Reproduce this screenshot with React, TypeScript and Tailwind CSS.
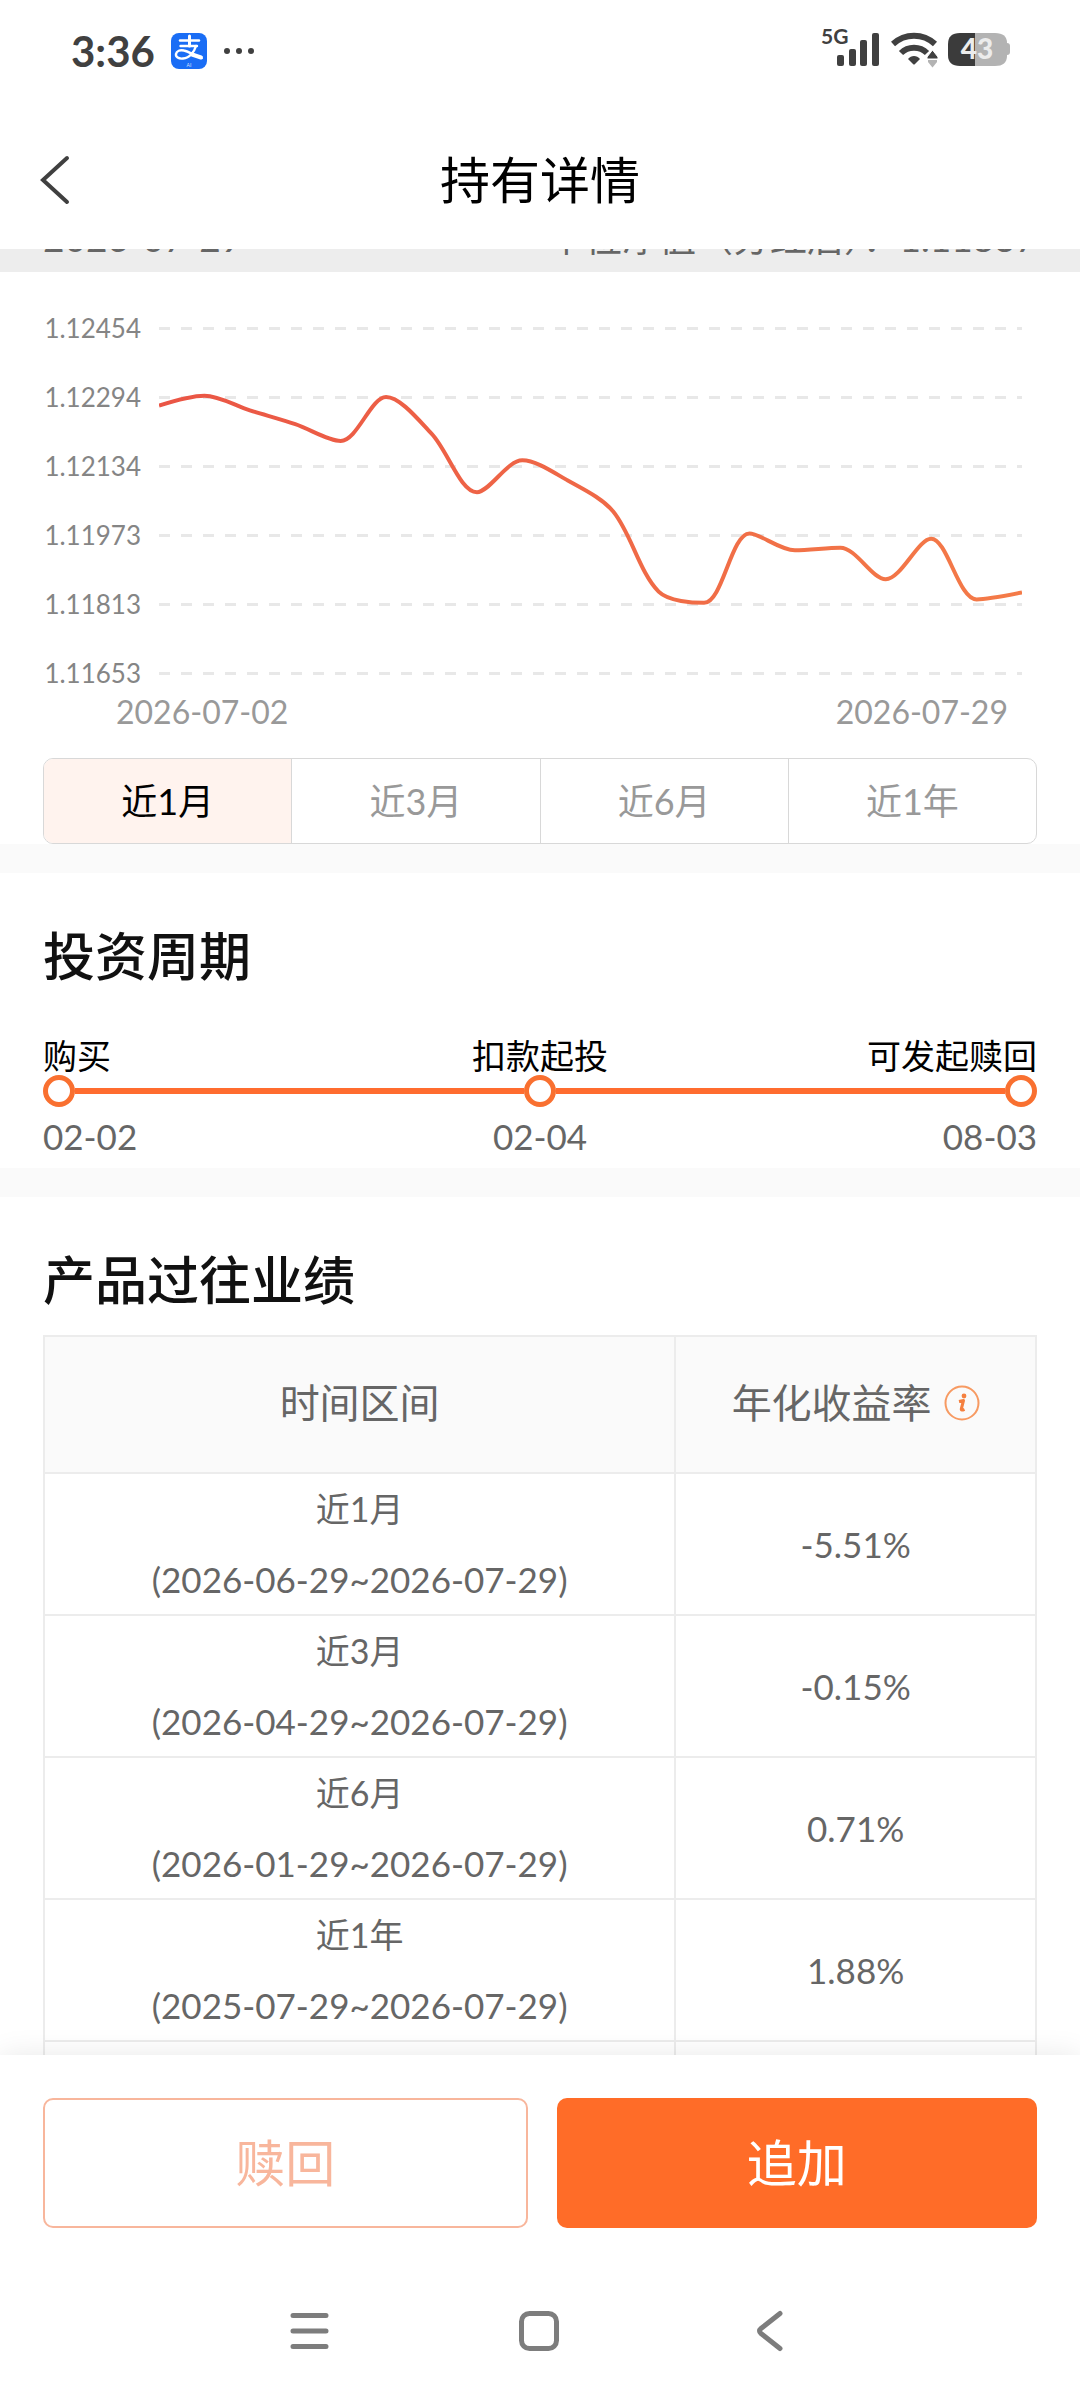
import {
  useState,
} from "react";

const ranges = ["近1月", "近3月", "近6月", "近1年"];

const axisLabels = [
  "1.12454",
  "1.12294",
  "1.12134",
  "1.11973",
  "1.11813",
  "1.11653",
];

const navValues = [
  1.12275, 1.12298, 1.12264, 1.12232, 1.12193,
  1.12295, 1.1221, 1.12074, 1.12148, 1.12101,
  1.12029, 1.11843, 1.11817, 1.11978, 1.11939,
  1.11945, 1.11872, 1.11966, 1.11825, 1.11841,
];

const steps = [
  { label: "购买", date: "02-02", align: "text-left" },
  { label: "扣款起投", date: "02-04", align: "text-center" },
  { label: "可发起赎回", date: "08-03", align: "text-right" },
];

const performance = [
  { name: "近1月", period: "(2026-06-29~2026-07-29)", rate: "-5.51%" },
  { name: "近3月", period: "(2026-04-29~2026-07-29)", rate: "-0.15%" },
  { name: "近6月", period: "(2026-01-29~2026-07-29)", rate: "0.71%" },
  { name: "近1年", period: "(2025-07-29~2026-07-29)", rate: "1.88%" },
];

const CHART_WIDTH = 863;
const ROW_GAP = 69;
const TOP = 16.5;
const SMOOTH = 0.32;

type Point = [number, number];

function clamp(p: Point, a: Point, b: Point): Point {
  return [
    Math.max(Math.min(p[0], Math.max(a[0], b[0])), Math.min(a[0], b[0])),
    Math.max(Math.min(p[1], Math.max(a[1], b[1])), Math.min(a[1], b[1])),
  ];
}

// bezier curve through every point, control points never overshoot the neighbours
function smoothPath(points: Point[]) {
  let d = `M${points[0][0]} ${points[0][1]}`;
  let out: Point = points[0];

  for (let i = 1; i < points.length; i++) {
    const prev = points[i - 1];
    const cur = points[i];
    const next = points[i + 1];
    let cpIn: Point = cur;
    let cpOut: Point = cur;

    if (next) {
      const lenPrev = Math.hypot(cur[0] - prev[0], cur[1] - prev[1]);
      const lenNext = Math.hypot(next[0] - cur[0], next[1] - cur[1]);
      const k = (SMOOTH * lenNext) / (lenNext + lenPrev);

      cpOut = clamp(
        [cur[0] + (next[0] - prev[0]) * k, cur[1] + (next[1] - prev[1]) * k],
        cur,
        next
      );
      const back = lenPrev / lenNext;
      cpIn = clamp(
        [
          cur[0] - (cpOut[0] - cur[0]) * back,
          cur[1] - (cpOut[1] - cur[1]) * back,
        ],
        prev,
        cur
      );
      cpOut = [
        cur[0] + (cur[0] - cpIn[0]) / back,
        cur[1] + (cur[1] - cpIn[1]) / back,
      ];
    }

    d += ` C${out[0]} ${out[1]} ${cpIn[0]} ${cpIn[1]} ${cur[0]} ${cur[1]}`;
    out = cpOut;
  }

  return d;
}

function StatusBar() {
  return (
    <div className="flex h-28 shrink-0 items-center justify-between pr-[69px] pb-[10px] pl-[71px] text-[#404040]">

      <div className="flex items-center">
        <span className="text-[42px] leading-[48px] font-bold">3:36</span>

        <svg className="ml-4 size-9" viewBox="0 0 36 36" fill="none">
          <rect width="36" height="36" rx="8" fill="#1a6df5" />
          <g stroke="#fff" strokeLinecap="round" strokeLinejoin="round">
            <path d="M9 7.500h19" strokeWidth="2.4" />
            <path d="M18.500 3v10" strokeWidth="3" />
            <path d="M9.500 13h16.500" strokeWidth="2.4" />
            <path
              d="M25 13C23.500 18 19 25 12 25.500C7.500 26 4.500 24 5 21C5.500 18 9 16.500 13 17.500C18 18.600 23 22.500 30 24.500"
              strokeWidth="2.4"
            />
            <path d="M21 21.500L30 24.500" strokeWidth="4" />
          </g>
          <text
            x="18"
            y="34"
            fontSize="5"
            textAnchor="middle"
            fill="#fff"
            opacity="0.8"
          >
            AI
          </text>
        </svg>

        <svg className="ml-4 h-2 w-8" viewBox="0 0 32 8" fill="currentColor">
          <circle cx="4" cy="4" r="3" />
          <circle cx="16" cy="4" r="3" />
          <circle cx="28" cy="4" r="3" />
        </svg>
      </div>

      <div className="flex items-center">
        <svg className="h-12 w-[60px]" viewBox="0 -1 60 48" fill="currentColor">
          <text x="0" y="16" fontSize="21" fontWeight="700">5G</text>
          <rect x="16" y="27" width="7" height="11" rx="2" />
          <rect x="28" y="21" width="7" height="17" rx="2" />
          <rect x="39" y="12" width="7" height="26" rx="2" />
          <rect x="51" y="5" width="7" height="33" rx="2" />
        </svg>

        <svg className="ml-[10px] h-12 w-12" viewBox="0 -1 48 48">
          <g fill="none" stroke="currentColor" strokeWidth="6">
            <path d="M2 16C14 5 32 5 44 16" />
            <path d="M10 25C17 18 29 18 36 25" />
          </g>
          <path
            d="M17 31C20 27 26 27 29 31L24 36Q23 37 22 36Z"
            fill="currentColor"
          />
          <path
            d="M41.500 22L47 29V31H36V29Z"
            fill="currentColor"
            stroke="#fff"
            strokeWidth="1"
          />
          <path d="M37 32H46V34L41.500 39.500L37 34Z" fill="#b3b3b3" />
        </svg>

        <svg className="ml-2 h-12 w-16" viewBox="0 -1 64 48">
          <path d="M28 5H48Q60 5 60 15V28Q60 38 48 38H28Z" fill="#b3b3b3" />
          <path d="M60 15Q63 15 63 18V24Q63 27 60 27Z" fill="#b3b3b3" />
          <path d="M28 5H13Q1 5 1 16V27Q1 38 13 38H28Z" fill="#3b3b3b" />
          <text
            x="30"
            y="31"
            fontSize="28"
            fontWeight="900"
            textAnchor="middle"
            fill="#ececec"
          >
            43
          </text>
        </svg>
      </div>

    </div>
  );
}

function Header() {
  return (
    <header className="grid h-[137px] shrink-0 grid-cols-[1fr_auto_1fr] items-center px-10 pb-[2px]">
      <button type="button" aria-label="返回" className="w-8 text-[#404040]">
        <svg
          className="h-[50px] w-8"
          viewBox="0 0 32 50"
          fill="none"
          stroke="currentColor"
          strokeWidth="4"
          strokeLinecap="round"
        >
          <path d="M27 3L3 25L27 47" />
        </svg>
      </button>

      <h1 className="text-[50px] leading-[60px] text-black">
        持有详情
      </h1>
    </header>
  );
}

function NavChart() {
  const [active, setActive] = useState(0);

  const points = navValues.map((value, i): Point => [
    (i * CHART_WIDTH) / (navValues.length - 1),
    TOP + ((1.12454 - value) / 0.00801) * ROW_GAP * 5,
  ]);

  return (
    <section className="pt-10">

      <div className="flex gap-[18px] pr-[58px] pl-[43px]">
        <div className="flex w-[98px] flex-col gap-9 text-right text-[26px] leading-[33px] text-[#858585]">
          {axisLabels.map((label) => (
            <span key={label}>{label}</span>
          ))}
        </div>

        <svg
          className="min-w-0 flex-1"
          viewBox="0 0 863 378"
          fill="none"
          role="img"
          aria-label="单位净值"
        >
          <defs>
            <linearGradient id="line" x1="0" x2="863" y1="0" y2="0" gradientUnits="userSpaceOnUse">
              <stop offset="0" stopColor="#ea5545" />
              <stop offset="1" stopColor="#f47b48" />
            </linearGradient>
          </defs>
          {axisLabels.map((label, i) => (
            <path
              key={label}
              d={`M0 ${TOP + i * ROW_GAP}H${CHART_WIDTH}`}
              stroke="#e8e8e8"
              strokeWidth="3"
              strokeDasharray="11 11"
            />
          ))}
          <path d={smoothPath(points)} stroke="url(#line)" strokeWidth="4" />
        </svg>
      </div>

      <div className="flex justify-between pr-[72px] pl-[116px] text-[32px] leading-[44px] text-[#999999]">
        <span>2026-07-02</span>
        <span>2026-07-29</span>
      </div>

      <div className="mx-[43px] mt-6 flex overflow-hidden rounded-[10px] border border-[#d8d8d8]">
        {ranges.map((range, i) => (
          <button
            key={range}
            type="button"
            aria-pressed={active === i}
            onClick={() => setActive(i)}
            className={`h-[84px] flex-1 text-[36px] ${
              i > 0 ? "border-l border-[#d8d8d8]" : ""
            } ${
              active === i ? "bg-[#fff3ee] text-black" : "text-[#999999]"
            }`}
          >
            {range}
          </button>
        ))}
      </div>

    </section>
  );
}

function InvestCycle() {
  return (
    <section className="px-[43px] pt-[53px] pb-[10px]">
      <h2 className="text-[52px] leading-[60px] font-medium text-[#111111]">
        投资周期
      </h2>

      <div className="mt-[51px] grid grid-cols-3 text-[34px] leading-[38px] text-black">
        {steps.map((step) => (
          <span key={step.label} className={step.align}>{step.label}</span>
        ))}
      </div>

      <div className="flex items-center">
        <span className="size-8 rounded-full border-[5px] border-[#f97030]" />
        <span className="h-[6px] flex-1 bg-[#ff6c2f]" />
        <span className="size-8 rounded-full border-[5px] border-[#f97030]" />
        <span className="h-[6px] flex-1 bg-[#ff6c2f]" />
        <span className="size-8 rounded-full border-[5px] border-[#f97030]" />
      </div>

      <div className="mt-[7px] grid grid-cols-3 text-[35px] leading-[44px] text-[#666666]">
        {steps.map((step) => (
          <span key={step.date} className={step.align}>{step.date}</span>
        ))}
      </div>
    </section>
  );
}

function InfoIcon() {
  return (
    <svg className="size-9" viewBox="0 0 36 36" fill="none">
      <circle cx="18" cy="18" r="16.500" stroke="#f79a62" strokeWidth="2" />
      <circle cx="20" cy="11" r="2.400" fill="#f5803f" />
      <path
        d="M15 16.500L19.500 15.500L17.300 24Q17 26 20.500 24.300"
        stroke="#f5803f"
        strokeWidth="3"
        strokeLinejoin="round"
      />
    </svg>
  );
}

function PastPerformance() {
  return (
    <section className="px-[43px] pt-[53px]">
      <h2 className="text-[52px] leading-[60px] font-medium text-[#111111]">
        产品过往业绩
      </h2>

      <table className="mt-[25px] w-full table-fixed border-collapse text-center text-[35px] leading-[70px] text-[#666666] [&_td]:border-2 [&_td]:border-[#ececec] [&_td]:p-0 [&_th]:border-2 [&_th]:border-[#ececec]">
        <colgroup>
          <col className="w-7/11" />
          <col />
        </colgroup>
        <thead>
          <tr className="h-[137px] bg-[#fafafa] text-[40px]">
            <th className="pb-1 font-normal">时间区间</th>
            <th className="pb-1 font-normal">
              <span className="flex items-center justify-center gap-3">
                年化收益率
                <button type="button" aria-label="说明">
                  <InfoIcon />
                </button>
              </span>
            </th>
          </tr>
        </thead>
        <tbody>
          {performance.map((row) => (
            <tr key={row.name}>
              <td>
                <p className="text-[34px]">{row.name}</p>
                <p>{row.period}</p>
              </td>
              <td>{row.rate}</td>
            </tr>
          ))}
          <tr className="h-[142px]">
            <td />
            <td />
          </tr>
        </tbody>
      </table>
    </section>
  );
}

function BottomBar() {
  return (
    <footer className="relative shrink-0 bg-white shadow-[0_0_28px_rgba(0,0,0,0.09)]">

      <div className="flex gap-[29px] px-[43px] pt-[43px]">
        <button
          type="button"
          className="h-[130px] flex-1 rounded-[10px] border-2 border-[#f8b69c] text-[50px] text-[#f8b69c]"
        >
          赎回
        </button>
        <button
          type="button"
          className="h-[130px] flex-1 rounded-[10px] bg-[#ff6c28] text-[50px] text-white"
        >
          追加
        </button>
      </div>

      <nav className="mt-[34px] flex h-[138px] items-center justify-center gap-[186px] text-[#7d7d7d]">
        <button type="button" aria-label="最近任务">
          <svg className="size-11" viewBox="0 0 44 44" fill="none" stroke="currentColor" strokeWidth="5" strokeLinecap="round">
            <path d="M5 6.500H38M5 22H38M5 37.500H38" />
          </svg>
        </button>
        <button type="button" aria-label="主屏幕">
          <svg className="size-11" viewBox="0 0 44 44" fill="none" stroke="currentColor" strokeWidth="5">
            <rect x="3.500" y="4.500" width="35" height="35" rx="8" />
          </svg>
        </button>
        <button type="button" aria-label="返回">
          <svg className="size-11" viewBox="0 0 44 44" fill="none" stroke="currentColor" strokeWidth="5" strokeLinecap="round" strokeLinejoin="round">
            <path d="M32 4.500L13 19.500Q10 22 13 24.500L32 39.500" />
          </svg>
        </button>
      </nav>

    </footer>
  );
}

function App() {
  return (
    <div className="flex h-screen flex-col overflow-hidden bg-white font-[Lato,'Noto_Sans_CJK_SC',sans-serif]">
      <StatusBar />
      <Header />

      <main className="min-h-0 flex-1 overflow-hidden">
        {/* net value row, scrolled up under the header */}
        <div className="h-[23px] overflow-hidden bg-[#ededed] px-[43px]">
          <div className="-mt-[34px] flex justify-between text-[37px] leading-[46px] text-[#666666]">
            <span>2026-07-29</span>
            <span>单位净值（分红后）：1.11837</span>
          </div>
        </div>

        <NavChart />
        <div className="h-[29px] bg-[#fafafa]" />
        <InvestCycle />
        <div className="h-[29px] bg-[#fafafa]" />
        <PastPerformance />
      </main>

      <BottomBar />
    </div>
  );
}

export default App;
